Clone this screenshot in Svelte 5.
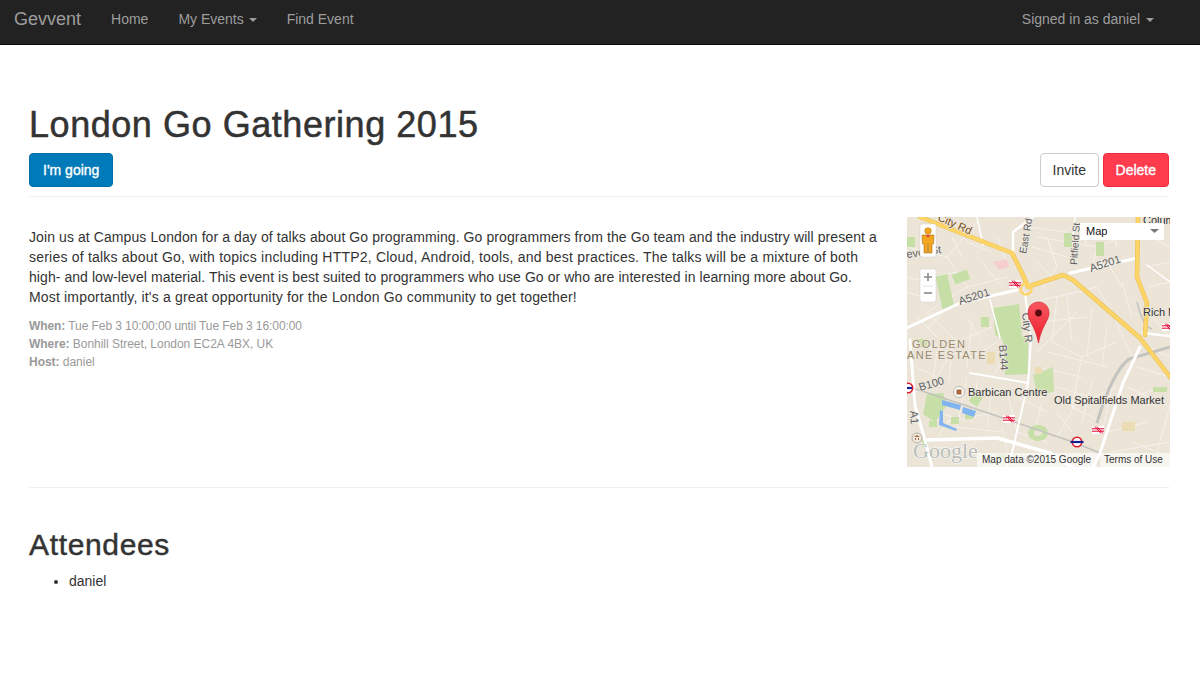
<script>
  const minor = [
    "M0 30L40 40L60 70L20 95", "M60 70L100 60", "M40 40L70 5", "M20 95L50 125L85 110", "M50 125L30 160L8 150",
    "M140 20L150 50L135 72", "M130 20L190 30L185 50", "M190 30L225 15", "M150 80L190 70L205 95", "M150 80L145 125L175 140L210 125",
    "M175 140L165 190L195 205", "M205 95L225 140", "M240 50L263 45", "M240 70L263 65", "M245 100L263 120", "M220 170L263 190L250 235",
    "M130 170L170 185L150 220", "M60 160L50 210L95 215", "M20 130L65 140", "M65 140L90 125", "M25 60L50 55", "M15 190L45 200L30 220",
    "M100 175L110 215L140 225", "M200 215L240 205", "M225 225L263 240", "M60 100L75 125", "M170 95L130 135", "M210 30L205 10", "M90 20L100 45",
    "M20 112L45 85", "M120 10L160 15", "M165 190L210 170", "M50 235L70 225",
    "M125 85L170 75", "M135 105L180 100", "M160 80L165 125", "M185 90L180 140", "M200 110L195 150", "M140 135L200 150",
    "M128 150L175 160", "M150 170L200 185", "M185 165L175 205", "M205 170L195 215", "M135 185L125 225", "M110 180L140 195",
    "M70 165L65 205", "M85 170L80 210", "M40 205L90 195", "M30 135L25 170", "M45 130L42 165", "M65 105L60 150", "M10 100L30 120",
    "M0 60L20 65", "M0 75L15 80", "M60 25L85 35", "M75 45L95 70", "M45 20L55 40", "M125 30L160 40", "M130 45L145 60", "M175 10L180 30",
    "M200 45L215 70", "M215 65L225 100", "M245 20L263 30", "M240 130L263 140", "M225 180L255 170", "M230 150L263 160", "M105 130L85 160",
    "M95 210L100 235", "M30 230L70 235", "M150 195L165 215", "M205 235L263 225"
  ];
  const nationalRail = [[102, 202], [191, 213], [261, 110]];
</script>

<nav class="navbar">
  <div class="nav-left">
    <span class="brand">Gevvent</span>
    <span class="nav-link">Home</span>
    <span class="nav-link">My Events <i class="caret"></i></span>
    <span class="nav-link">Find Event</span>
  </div>
  <span class="nav-link user">Signed in as daniel <i class="caret"></i></span>
</nav>

<main class="page">
  <h1>London Go Gathering 2015</h1>
  <div class="actions">
    <button class="btn primary">I'm going</button>
    <div class="actions-right">
      <button class="btn plain">Invite</button>
      <button class="btn danger">Delete</button>
    </div>
  </div>
  <hr class="rule-top" />

  <div class="details">
    <div class="info">
      <p>
        <span class="line l1">Join us at Campus London for a day of talks about Go programming. Go programmers from the Go team and the industry will present a</span>
        <span class="line l2">series of talks about Go, with topics including HTTP2, Cloud, Android, tools, and best practices. The talks will be a mixture of both</span>
        <span class="line l3">high- and low-level material. This event is best suited to programmers who use Go or who are interested in learning more about Go.</span>
        <span class="line l4">Most importantly, it's a great opportunity for the London Go community to get together!</span>
      </p>
      <div class="meta">
        <div class="when"><b>When:</b> Tue Feb 3 10:00:00 until Tue Feb 3 16:00:00</div>
        <div><b>Where:</b> Bonhill Street, London EC2A 4BX, UK</div>
        <div><b>Host:</b> daniel</div>
      </div>
    </div>

    <svg class="map" viewBox="0 0 263 250" width="263" height="250" role="img" aria-label="Map">
      <defs>
        <linearGradient id="pin" x1="0" y1="0" x2="0" y2="1">
          <stop offset="0" stop-color="#f7575f" />
          <stop offset="1" stop-color="#ee1c2c" />
        </linearGradient>
      </defs>
      <rect width="263" height="250" fill="#ebe4d7" />
      <!-- minor streets -->
      <g fill="none" stroke="#f5f2ec" stroke-width="1">
        {#each minor as d}<path {d} />{/each}
      </g>
      <!-- parks and buildings -->
      <g fill="#c5dfa6">
        <polygon points="86,91 112,87 115,119 121,122 121,157 98,158 96,123 88,118" />
        <polygon points="126,158 146,150 147,175 130,178" opacity=".9" />
        <rect x="0" y="20" width="8" height="10" />
        <rect x="32" y="58" width="12" height="34" transform="rotate(-12 38 75)" />
        <rect x="46" y="55" width="16" height="10" transform="rotate(-20 54 60)" />
        <rect x="74" y="100" width="8" height="10" />
        <rect x="157" y="16" width="8" height="14" />
        <rect x="189" y="25" width="8" height="14" />
        <polygon points="20,177 36,176 40,188 28,205 16,197" />
        <polygon points="68,173 76,180 70,190 62,184" />
        <rect x="10" y="122" width="10" height="8" />
        <rect x="246" y="170" width="14" height="5" />
        <rect x="22" y="204" width="8" height="6" />
        <rect x="58" y="197" width="8" height="5" />
        <rect x="44" y="200" width="8" height="7" />
        <rect x="90" y="237" width="8" height="5" />
        <rect x="15" y="222" width="6" height="8" />
      </g>
      <ellipse cx="131" cy="216" rx="10" ry="8" fill="#c5dfa6" />
      <ellipse cx="131" cy="216" rx="4" ry="3" fill="#ebe4d7" />
      <polygon points="86,45 100,42 102,50 92,53" fill="#f4cfcb" />
      <rect x="80" y="135" width="8" height="12" fill="#ecdcb4" />
      <rect x="215" y="205" width="13" height="9" fill="#ecdcb4" />
      <rect x="128" y="150" width="7" height="7" fill="#ecdcb4" />
      <!-- water -->
      <g fill="#7fb4f0">
        <polygon points="35,183 54,188 53,193 35,188" />
        <polygon points="56,190 69,194 67,200 55,196" />
        <polygon points="33,193 36,194 36,206 50,212 49,214 32,208" />
      </g>
      <!-- railway -->
      <g fill="none" stroke="#c3c3c0">
        <path d="M263 130L222 142Q205 155 190 206" stroke-width="3" />
        <path d="M6 171L96 201L166 225L193 236" stroke-width="1.500" />
        <path d="M230 85Q236 110 245 112" stroke-width="1.500" />
      </g>
      <!-- white roads -->
      <g fill="none" stroke="#fff" stroke-linejoin="round" stroke-linecap="round">
        <path d="M0 111L53 86L110 73" stroke-width="3" />
        <path d="M163 56L230 41" stroke-width="3" />
        <path d="M106 36L106 15L126 0" stroke-width="2.500" />
        <path d="M118 76L124 123L121 166L105 236L100 250" stroke-width="2" />
        <path d="M63 156L121 166" stroke-width="2" />
        <path d="M3 123L8 189L18 223L25 250" stroke-width="3" />
        <path d="M18 223L90 221L143 236L165 250" stroke-width="3.500" />
        <path d="M233 130L216 166L193 236L186 250" stroke-width="3" />
        <path d="M83 83L93 121" stroke-width="1.500" />
        <path d="M70 0L76 28" stroke-width="1.500" />
        <path d="M240 48L263 65" stroke-width="1.500" />
        <path d="M236 116L263 119" stroke-width="2.500" />
        <path d="M168 0L166 18" stroke-width="1.500" />
      </g>
      <!-- yellow roads -->
      <g fill="none" stroke-linejoin="round" stroke-linecap="round">
        <g stroke="#e9bd50" stroke-width="4.500">
          <path d="M13 0L105 36L116 58L121 70" />
          <path d="M126 68L156 58L166 63L233 121L263 160" />
          <path d="M231 0L230 60L240 86L238 118" />
        </g>
        <g stroke="#fdd566" stroke-width="3.500">
          <path d="M13 0L105 36L116 58L121 70" />
          <path d="M126 68L156 58L166 63L233 121L263 160" />
          <path d="M231 0L230 60L240 86L238 118" />
        </g>
        <circle cx="119" cy="72" r="5.500" stroke="#fdd566" stroke-width="2.500" />
      </g>
      <!-- labels -->
      <g class="lbl">
        <text x="30" y="3" transform="rotate(24 30 3)" class="brown">City Rd</text>
        <text x="119" y="37" transform="rotate(-80 119 37)" class="small">East Rd</text>
        <text x="170" y="48" transform="rotate(-86 170 48)" class="small">Pitfield St</text>
        <text x="0" y="41" transform="rotate(-8 0 41)">ever St</text>
        <text x="53" y="88" transform="rotate(-18 53 88)">A5201</text>
        <text x="184" y="55" transform="rotate(-18 184 55)">A5201</text>
        <text x="236" y="99" class="dark">Rich M</text>
        <text x="236" y="7" class="dark">Colum</text>
        <text x="115" y="96" transform="rotate(84 115 96)">City R</text>
        <text x="92" y="128" transform="rotate(86 92 128)">B144</text>
        <text x="13" y="174" transform="rotate(-16 13 174)">B100</text>
        <text x="3" y="194" transform="rotate(86 3 194)">A1</text>
        <text x="5" y="131" class="estate">GOLDEN</text>
        <text x="0" y="142" class="estate">ANE ESTATE</text>
        <text x="61" y="179" class="dark">Barbican Centre</text>
        <text x="147" y="187" class="dark">Old Spitalfields Market</text>
      </g>
      <!-- POI -->
      <circle cx="52" cy="175" r="5.500" fill="#fff" stroke="#b9b3a6" />
      <rect x="49.500" y="172.500" width="5" height="5" fill="#a8663c" />
      <circle cx="10" cy="221" r="5" fill="#efe9de" stroke="#b9b3a6" />
      <path d="M7 220L10 218L13 220ZM8 221h1v2h-1zM11 221h1v2h-1z" fill="#a8663c" />
      <!-- rail symbols -->
      <g transform="translate(108,67)">
        <rect x="-6" y="-4" width="12" height="8" rx="1" fill="#fff" />
        <path d="M-6 -1.200H6M-6 1.200H6M-3 -3.500L3 3.500M-1 -3.500L5 3.500" stroke="#e4002b" stroke-width="1" fill="none" />
      </g>
      {#each nationalRail as [x, y]}
        <g transform="translate({x},{y})">
          <rect x="-6" y="-4" width="12" height="8" rx="1" fill="#fff" />
          <path d="M-6 -1.200H6M-6 1.200H6M-3 -3.500L3 3.500M-1 -3.500L5 3.500" stroke="#e4002b" stroke-width="1" fill="none" />
        </g>
      {/each}
      <g transform="translate(170,225)">
        <circle r="4.700" fill="#fff" stroke="#dd1b2d" stroke-width="1.600" />
        <rect x="-6.500" y="-1.100" width="13" height="2.200" fill="#14218f" />
      </g>
      <g transform="translate(1,171)">
        <circle r="4.700" fill="#fff" stroke="#dd1b2d" stroke-width="1.600" />
        <rect x="-6" y="-1.100" width="10" height="2.200" fill="#14218f" />
      </g>
      <!-- marker -->
      <path d="M131.500 85C125 85 121 90 121 96C121 104 128 108 131.500 126C135 108 142 104 142 96C142 90 138 85 131.500 85Z" fill="url(#pin)" stroke="#d01c2a" stroke-width=".6" />
      <circle cx="131.500" cy="96" r="3.400" fill="#5a0a10" />
      <!-- pegman -->
      <rect x="13" y="7" width="16" height="33" rx="2" fill="#fff" stroke="#ccc" stroke-width=".5" />
      <circle cx="21" cy="14" r="3.300" fill="#f2a51f" stroke="#b97a10" stroke-width=".5" />
      <path d="M15 18h12l-.5 9h-1.500v9h-3.500v-8h-1v8H17v-9h-1.500z" fill="#f2a51f" stroke="#a96f0c" stroke-width=".6" />
      <path d="M18.500 18l2.500 3l2.500-3z" fill="#e8483f" />
      <!-- zoom -->
      <rect x="13" y="52" width="16" height="33" rx="2" fill="#fff" stroke="#ccc" stroke-width=".5" />
      <path d="M17 60h8M21 56v8" stroke="#8a8a8a" stroke-width="1.600" />
      <path d="M16 69h10" stroke="#e2e2e2" />
      <path d="M17 76h8" stroke="#8a8a8a" stroke-width="1.600" />
      <!-- map type -->
      <rect x="173" y="6" width="84" height="17" fill="#fff" />
      <text x="179" y="18" class="plain-label map-type">Map</text>
      <path d="M243 12h9l-4.500 4z" fill="#777" />
      <!-- attribution -->
      <text x="6" y="241" class="goog">Google</text>
      <rect x="70" y="236" width="120" height="14" fill="#fff" opacity=".62" />
      <rect x="193" y="236" width="70" height="14" fill="#fff" opacity=".62" />
      <text x="75" y="246" class="plain-label attr">Map data ©2015 Google</text>
      <text x="197" y="246" class="plain-label attr">Terms of Use</text>
    </svg>
  </div>

  <hr class="rule-bottom" />

  <h2>Attendees</h2>
  <ul>
    <li>daniel</li>
  </ul>
</main>

<style>
  :global(body) {
    margin: 0;
    background: #fff;
    color: #333;
    font-family: "Liberation Sans", Arial, sans-serif;
    font-size: 14px;
    line-height: 20px;
  }
  .navbar {
    display: flex;
    justify-content: space-between;
    height: 44px;
    padding: 0 30px 0 14px;
    background: #222;
    border-bottom: 1px solid #080808;
  }
  .nav-left {
    display: flex;
  }
  .brand {
    font-size: 18px;
    line-height: 38px;
    color: #9d9d9d;
    margin-right: 15px;
  }
  .nav-link {
    padding: 0 15px;
    line-height: 38px;
    color: #9d9d9d;
  }
  .navbar > .user {
    padding: 0 16px 0 0;
  }
  .caret {
    display: inline-block;
    width: 0;
    height: 0;
    margin-left: 1px;
    vertical-align: middle;
    border-top: 4px solid #9d9d9d;
    border-left: 4px solid transparent;
    border-right: 4px solid transparent;
  }
  .user .caret {
    margin-left: 2px;
  }
  .page {
    padding: 60px 31px 0 29px;
  }
  h1 {
    margin: 0 0 8px;
    font-size: 36px;
    font-weight: 400;
    line-height: 40px;
    letter-spacing: 0.55px;
    -webkit-text-stroke: 0.5px #333;
    color: #333;
  }
  .actions {
    display: flex;
    justify-content: space-between;
  }
  .actions-right {
    display: flex;
    gap: 4px;
  }
  .btn {
    height: 34px;
    padding: 0 12px;
    font: 14px/20px "Liberation Sans", Arial, sans-serif;
    border-radius: 4px;
    border: 1px solid #ccc;
    background: #fff;
    color: #333;
  }
  .plain {
    padding: 0 11.5px;
  }
  .primary {
    padding: 0 13px;
    background: #007ab8;
    border-color: #006ea6;
    color: #fff;
    -webkit-text-stroke: 0.35px #fff;
  }
  .danger {
    background: #ff3b4e;
    border-color: #f5293e;
    color: #fff;
    -webkit-text-stroke: 0.35px #fff;
  }
  hr {
    border: 0;
    border-top: 1px solid #eee;
    margin: 0;
  }
  .rule-top {
    margin: 9px 0 20px;
  }
  .details {
    display: flex;
    justify-content: space-between;
    height: 250px;
  }
  .info {
    width: 860px;
    padding-top: 10px;
  }
  .info p {
    margin: 0 0 10px;
  }
  .line {
    display: block;
    white-space: nowrap;
  }
  .l1 {
    letter-spacing: 0.088px;
  }
  .l2 {
    letter-spacing: 0.21px;
  }
  .l3 {
    letter-spacing: 0.065px;
  }
  .l4 {
    letter-spacing: 0.17px;
  }
  .meta {
    font-size: 12px;
    line-height: 18px;
    color: #999;
    letter-spacing: -0.03px;
  }
  .when {
    letter-spacing: -0.08px;
  }
  .map {
    display: block;
    flex: none;
    margin-right: -1px;
  }
  .lbl text {
    font-family: "Liberation Sans", Arial, sans-serif;
    font-size: 11px;
    fill: #5f5f5f;
    paint-order: stroke;
    stroke: #ece8df;
    stroke-width: 1.5px;
  }
  .lbl .small {
    font-size: 10px;
  }
  .lbl .dark {
    fill: #333;
  }
  .lbl .brown {
    fill: #7a4b12;
  }
  .lbl .estate {
    letter-spacing: 1.3px;
    fill: #9b8a6c;
  }
  .plain-label {
    font-family: "Liberation Sans", Arial, sans-serif;
    fill: #333;
  }
  .map-type {
    font-size: 11px;
    fill: #111;
  }
  .attr {
    font-size: 10px;
  }
  .goog {
    font-family: "Liberation Serif", serif;
    font-size: 22px;
    fill: #b9bdb9;
    stroke: #fff;
    stroke-width: 1px;
    paint-order: stroke;
  }
  .rule-bottom {
    margin: 20px 0 0;
  }
  h2 {
    margin: 40px 0 10px;
    font-size: 30px;
    font-weight: 400;
    line-height: 33px;
    letter-spacing: 0.65px;
    -webkit-text-stroke: 0.45px #333;
    color: #333;
  }
  ul {
    margin: 0;
    padding-left: 40px;
  }
</style>
